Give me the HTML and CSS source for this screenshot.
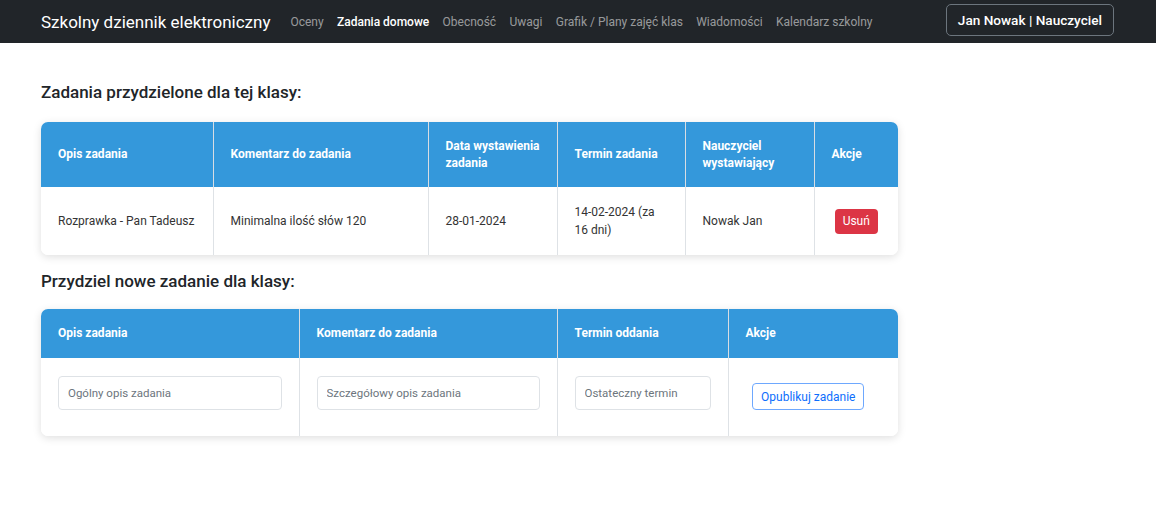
FILE: index.html
```html
<!DOCTYPE html>
<html lang="pl">
<head>
<meta charset="utf-8">
<title>Szkolny dziennik elektroniczny</title>
<link rel="stylesheet" href="styles.css">
</head>
<body>
<nav class="navbar">
  <div class="nav-left">
    <span class="brand">Szkolny dziennik elektroniczny</span>
    <ul class="nav-links">
      <li>Oceny</li>
      <li class="active">Zadania domowe</li>
      <li>Obecność</li>
      <li>Uwagi</li>
      <li>Grafik / Plany zajęć klas</li>
      <li>Wiadomości</li>
      <li>Kalendarz szkolny</li>
    </ul>
  </div>
  <button class="user-btn">Jan Nowak | Nauczyciel</button>
</nav>
<main class="content">
  <h2 class="section-title">Zadania przydzielone dla tej klasy:</h2>
  <div class="card">
    <table class="tbl tbl-assigned">
      <thead>
        <tr>
          <th class="c1">Opis zadania</th>
          <th class="c2">Komentarz do zadania</th>
          <th class="c3">Data wystawienia zadania</th>
          <th class="c4">Termin zadania</th>
          <th class="c5">Nauczyciel wystawiający</th>
          <th class="c6">Akcje</th>
        </tr>
      </thead>
      <tbody>
        <tr>
          <td>Rozprawka - Pan Tadeusz</td>
          <td>Minimalna ilość słów 120</td>
          <td>28-01-2024</td>
          <td>14-02-2024 (za 16 dni)</td>
          <td>Nowak Jan</td>
          <td class="center"><button class="btn-danger">Usuń</button></td>
        </tr>
      </tbody>
    </table>
  </div>
  <h2 class="section-title second">Przydziel nowe zadanie dla klasy:</h2>
  <div class="card">
    <table class="tbl tbl-new">
      <thead>
        <tr>
          <th class="n1">Opis zadania</th>
          <th class="n2">Komentarz do zadania</th>
          <th class="n3">Termin oddania</th>
          <th class="n4">Akcje</th>
        </tr>
      </thead>
      <tbody>
        <tr>
          <td class="form-cell"><input class="field" type="text" placeholder="Ogólny opis zadania"></td>
          <td class="form-cell"><input class="field" type="text" placeholder="Szczegółowy opis zadania"></td>
          <td class="form-cell"><input class="field" type="text" placeholder="Ostateczny termin"></td>
          <td class="form-cell action-cell"><button class="btn-outline">Opublikuj zadanie</button></td>
        </tr>
      </tbody>
    </table>
  </div>
</main>
</body>
</html>
```
FILE: styles.css
```css
* { box-sizing: border-box; }
html, body { margin: 0; padding: 0; }
body {
  font-family: Roboto, "Liberation Sans", Arial, sans-serif;
  background: #fff;
  color: #212529;
}
.navbar {
  height: 43px;
  background: #212529;
  display: flex;
  align-items: center;
  justify-content: space-between;
  padding: 0 42px 0 41px;
}
.nav-left { display: flex; align-items: center; }
.brand {
  color: #fff;
  font-size: 17px;
  margin-right: 20px;
}
.nav-links {
  list-style: none;
  margin: 0;
  padding: 0;
  display: flex;
  gap: 13.3px;
  font-size: 12px;
}
.nav-links li { color: rgba(255,255,255,0.55); }
.nav-links li.active { color: #fff; font-weight: 500; }
.user-btn {
  font-family: inherit;
  background: transparent;
  color: #fff;
  border: 1px solid #6c757d;
  border-radius: 5px;
  height: 32px;
  padding: 0 11px;
  font-size: 13.6px;
  font-weight: 500;
  margin-top: -3px;
}
.content {
  padding: 38px 41px;
}
.section-title {
  font-size: 17px;
  font-weight: 500;
  margin: 0 0 19px;
  line-height: 22px;
  color: #212529;
}
.section-title.second { margin-top: 15px; margin-bottom: 17px; }
.card {
  width: 857px;
  border-radius: 7px;
  box-shadow: 0 2px 8px rgba(0,0,0,0.13);
  overflow: hidden;
  background: #fff;
}
.tbl {
  width: 100%;
  border-collapse: collapse;
  table-layout: fixed;
}
.tbl th {
  background: #3498db;
  color: #fff;
  font-size: 12px;
  font-weight: 700;
  text-align: left;
  padding: 0 12px 0 17px;
  line-height: 17px;
  border-left: 1px solid #d8dde3;
}
.tbl td {
  font-size: 12px;
  color: #333;
  padding: 0 16px 0 17px;
  line-height: 18px;
  border-left: 1px solid #dee2e6;
  background: #fff;
}
.tbl th:first-child, .tbl td:first-child { border-left: none; }
.tbl td.center { text-align: center; padding: 0 8px; }
.tbl-assigned thead tr { height: 65px; }
.tbl-assigned tbody tr { height: 68px; }
.c1 { width: 172px; }
.c2 { width: 215px; }
.c3 { width: 129px; }
.c4 { width: 128px; }
.c5 { width: 129px; }
.c6 { width: 84px; }
.tbl-new thead tr { height: 49px; }
.tbl-new tbody tr { height: 78px; }
.tbl-new td.form-cell {
  vertical-align: top;
  padding: 18px 17px 0 17px;
}
.tbl-new td.action-cell {
  text-align: center;
  padding: 18px 12px 0 2px;
}
.n1 { width: 258px; }
.n2 { width: 258px; }
.n3 { width: 171px; }
.n4 { width: 170px; }
.btn-danger {
  font-family: inherit;
  background: #dc3545;
  color: #fff;
  border: none;
  border-radius: 4px;
  font-size: 12px;
  height: 25px;
  padding: 0 8px;
}
.field {
  font-family: inherit;
  width: 100%;
  height: 34px;
  border: 1px solid #dee2e6;
  border-radius: 4px;
  padding: 0 9px;
  font-size: 11.5px;
  color: #333;
  display: block;
}
.field::placeholder { color: #6c757d; }
.btn-outline {
  font-family: inherit;
  background: #fff;
  color: #0d6efd;
  border: 1px solid #6ea8fe;
  border-radius: 4px;
  height: 27px;
  padding: 0 8px;
  font-size: 12px;
  margin-top: 7px;
}
```
